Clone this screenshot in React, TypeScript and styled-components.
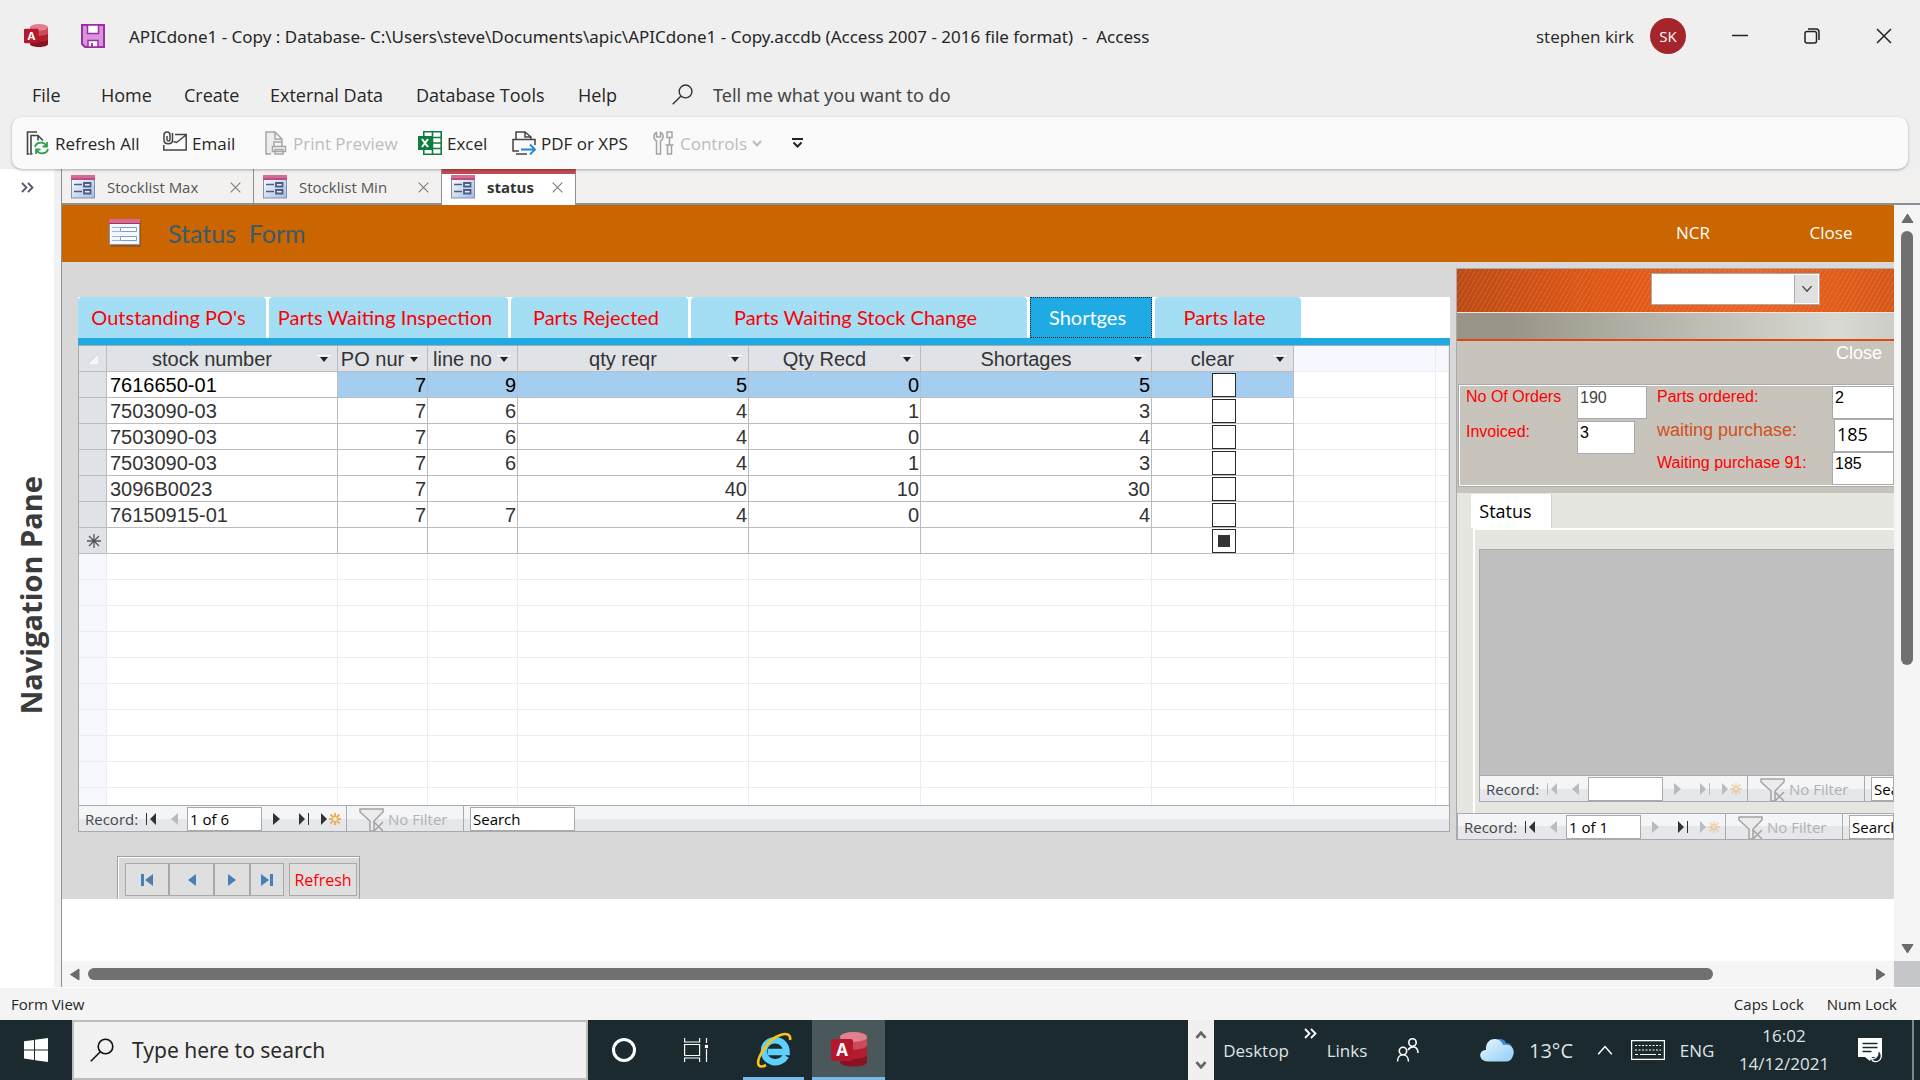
import React from "react";
import styled, { createGlobalStyle, css } from "styled-components";

const ui = `"Open Sans", "Noto Sans", sans-serif`;
const wideUi = `"Noto Sans", "Open Sans", sans-serif`;
const arial = `"Liberation Sans", Arial, sans-serif`;
const line = "#bcbcbc";
const frame = "#a9aaae";

const GlobalStyle = createGlobalStyle`
  *, *::before, *::after { box-sizing: border-box; }
  body { margin: 0; background: #fff; font-family: ${ui}; color: #262626; }
  button, input, select { font: inherit; color: inherit; margin: 0; padding: 0; border: 0; border-radius: 0; background: none; outline: none; }
  svg { display: block; flex: none; }
`;

const Page = styled.div`
  display: flex;
  flex-direction: column;
  height: 100vh;
  overflow: hidden;
`;

/* ---------- window header ---------- */

const WindowHeader = styled.header`
  background: #efefef;
  flex: none;
  position: relative;
  z-index: 1;
`;

const TitleBar = styled.div`
  display: flex;
  align-items: center;
  height: 72px;
  padding: 0 24px;
`;

const IconButton = styled.button`
  display: flex;
  align-items: center;
  justify-content: center;
`;

const SaveButton = styled(IconButton)`
  margin: 0 24px 0 33px;
`;

const WindowTitle = styled.h1`
  flex: 1;
  margin: 0;
  font-family: ${wideUi};
  font-size: 17px;
  font-weight: 400;
  white-space: pre;
`;

const Account = styled.button`
  display: flex;
  align-items: center;
  gap: 16px;
  font-size: 17px;
  margin-right: 42px;
`;

const Avatar = styled.span`
  width: 36px;
  height: 36px;
  border-radius: 50%;
  background: #a4262c;
  color: #fff;
  font-size: 15px;
  line-height: 36px;
`;

const WindowButtons = styled.div`
  display: flex;
  gap: 48px;
`;

const CaptionButton = styled(IconButton)`
  width: 24px;
  height: 32px;
`;

const MenuBar = styled.nav`
  display: flex;
  align-items: center;
  height: 45px;
  padding-left: 32px;
  font-size: 18px;
`;

const MenuItem = styled.button<{ $width: number }>`
  width: ${(p) => p.$width}px;
  text-align: left;
  white-space: nowrap;
`;

const TellMe = styled.label`
  display: flex;
  align-items: center;
  gap: 20px;
  padding-left: 10px;

  input {
    width: 300px;
    font-family: ${wideUi};
    font-size: 18px;
  }
  input::placeholder {
    color: #444;
    opacity: 1;
  }
`;

const RibbonStrip = styled.div`
  padding: 0 12px;
`;

const Ribbon = styled.div`
  display: flex;
  align-items: center;
  height: 52px;
  padding-left: 14px;
  border-radius: 10px;
  background: #fafafa;
  box-shadow: 0 1px 3px rgba(0, 0, 0, 0.3);
  font-size: 17px;
`;

const RibbonButton = styled.button<{ $width: number }>`
  display: flex;
  align-items: center;
  gap: 5px;
  width: ${(p) => p.$width}px;
  white-space: nowrap;

  &:disabled {
    color: #bdbdbd;
  }
`;

/* ---------- main area ---------- */

const Main = styled.main`
  display: flex;
  flex: 1;
  min-height: 0;
  padding-bottom: 1px;
`;

const NavPane = styled.aside`
  display: flex;
  flex-direction: column;
  align-items: center;
  width: 62px;
  flex: none;
  padding-top: 7px;
  border-right: 1px solid #8b8f96;
  background: linear-gradient(90deg, #fff 54px, #f0f1f3 54px);
`;

const PaneToggle = styled(IconButton)`
  width: 24px;
  height: 22px;
  margin-right: 6px;
`;

const PaneTitle = styled.h2`
  margin: auto;
  padding: 0 0 6px;
  writing-mode: vertical-rl;
  transform: rotate(180deg);
  font-size: 29px;
  line-height: 56px;
  font-weight: 700;
  color: #3b3b3b;
  white-space: nowrap;
`;

const Document = styled.section`
  display: flex;
  flex-direction: column;
  flex: 1;
  min-width: 0;
`;

const DocTabs = styled.div`
  display: flex;
  height: 36px;
  flex: none;
  background: #f2f1ef;
  box-shadow: inset 0 -2px #8b9097;
`;

const DocTab = styled.div<{ $active?: boolean; $width: number }>`
  display: flex;
  align-items: center;
  width: ${(p) => p.$width}px;
  padding: 0 12px 0 9px;
  border-right: 1px solid #8b9097;
  font-size: 15px;
  color: #555;
  ${(p) =>
    p.$active &&
    css`
      background: #fff;
      border-top: 5px solid #c14a50;
      padding-bottom: 5px;
      font-weight: 700;
      color: #333;
    `}

  button:nth-of-type(1) {
    flex: 1;
    display: flex;
    align-items: center;
    gap: 12px;
    white-space: nowrap;
  }
`;

const Viewport = styled.div`
  display: grid;
  grid-template-columns: minmax(0, 1fr) 26px;
  grid-template-rows: minmax(0, 1fr) 26px;
  flex: 1;
  min-height: 0;
`;

const ScrollBar = styled.div<{ $vertical?: boolean }>`
  display: flex;
  flex-direction: ${(p) => (p.$vertical ? "column" : "row")};
  align-items: center;
  gap: 6px;
  padding: ${(p) => (p.$vertical ? "7px 0 6px" : "0 7px")};
  background: #f5f5f5;
`;

const Track = styled.div<{ $vertical?: boolean }>`
  flex: 1;
  display: flex;
  flex-direction: ${(p) => (p.$vertical ? "column" : "row")};
  align-items: stretch;
`;

const Thumb = styled.div<{ $vertical?: boolean }>`
  ${(p) => (p.$vertical ? "height: 61.6%; width: 12px;" : "width: 91.3%; height: 12px;")}
  border-radius: 6px;
  background: #707070;
`;

const ScrollCorner = styled.div`
  background: #c5c6ca;
`;

/* ---------- form ---------- */

const FormSurface = styled.div`
  overflow: hidden;
  background: #fff;
`;

const FormHeader = styled.header`
  display: flex;
  align-items: center;
  height: 57px;
  padding: 0 30px 2px 47px;
  background: #cb6500;
  color: #fff;
  font-size: 17px;
`;

const FormTitle = styled.h2`
  flex: 1;
  margin: 0;
  padding-left: 27px;
  font-family: Lato, sans-serif;
  font-size: 25px;
  font-weight: 400;
  color: #3a5c6b;
  white-space: pre;
`;

const HeaderButton = styled.button`
  width: 66px;
  margin-left: 72px;
  text-align: center;
`;

const FormBody = styled.div`
  display: flex;
  gap: 6px;
  padding: 6px 0 0 16px;
  background: #d8d8d8;
`;

const FormColumn = styled.div`
  flex: 1;
  min-width: 0;
  padding-top: 29px;
`;

const PageTabs = styled.div`
  display: flex;
  gap: 3px;
  height: 48px;
  background: #fff;
  border-bottom: 7px solid #1eabe4;
  font-family: Lato, sans-serif;
  font-size: 20px;
`;

const PageTab = styled.button<{ $width: number; $active?: boolean }>`
  width: ${(p) => p.$width}px;
  && {
    padding: 0 7px 2px 0;
    border-radius: 4px 4px 0 0;
    background: #a4def5;
    color: #fe0000;
  }
  white-space: nowrap;
  ${(p) =>
    p.$active &&
    css`
      && {
        background: #1eabe4;
        border: 1px dotted #123;
        border-radius: 0;
        color: #fff;
      }
    `}
`;

const Sheet = styled.div`
  border: 1px solid ${frame};
  border-width: 1px 1px 0;
  height: 460px;
  overflow: hidden;
  background: #fff;
`;

const Grid = styled.table`
  width: 100%;
  table-layout: fixed;
  border-collapse: separate;
  border-spacing: 0;
  font-family: ${arial};
  font-size: 20px;
  line-height: 24px;
  color: #333;

  tr {
    height: 26px;
  }
  th,
  td {
    padding: 1px 1px 0 3px;
    border-right: 1px solid ${line};
    border-bottom: 1px solid ${line};
    font-weight: 400;
    text-align: right;
    white-space: nowrap;
    overflow: hidden;
  }
  thead th {
    padding: 0;
    background: #dfe2e7;
  }
  thead th.rest {
    background: #f7f7ff;
    border-color: #ececf2;
  }
  td.name {
    text-align: left;
  }
  td.rest {
    border-color: #ededed;
  }
`;

const Selector = styled.th<{ $blank?: boolean }>`
  background: ${(p) => (p.$blank ? "#f7f7ff" : "#dfe2e6")};

  svg {
    margin: 0 auto;
  }
`;

const DataRow = styled.tr<{ $current?: boolean; $blank?: boolean }>`
  ${(p) =>
    p.$current &&
    css`
      color: #000;
      td:not(.name):not(.rest) {
        background: #a4cdf0;
      }
    `}
  ${(p) =>
    p.$blank &&
    css`
      && td,
      && th {
        border-color: #ededed;
      }
    `}
`;

const ColumnButton = styled.button`
  display: flex;
  align-items: center;
  width: 100%;
  height: 25px;
  && {
    padding-right: 6px;
  }

  span {
    flex: 1;
    text-align: center;
  }
`;

const Tick = styled.input`
  appearance: none;
  display: block;
  width: 24px;
  height: 24px;
  && {
    margin: 0 auto;
    border: 1px solid #2b2b2b;
    background: #fff;
  }
  &&:indeterminate {
    background: linear-gradient(#333, #333) center / 12px 12px no-repeat #fff;
  }
`;

/* ---------- record navigation ---------- */

const RecordBar = styled.div`
  display: flex;
  align-items: center;
  height: 27px;
  padding-left: 6px;
  border: 1px solid ${frame};
  background: linear-gradient(#f4f5f7 50%, #e6e7ea 50%);
  font-size: 15px;
  color: #44484e;
  white-space: nowrap;
  overflow: hidden;
`;

const RecordLabel = styled.label`
  display: flex;
  width: 56px;
  flex: none;
`;

const RecordButton = styled(IconButton)<{ $width: number }>`
  width: ${(p) => p.$width}px;
  height: 24px;
  flex: none;
  color: #333;

  &:disabled {
    color: #bbb;
  }
  &:disabled .star {
    opacity: 0.35;
  }
`;

const RecordInput = styled.input<{ $width: number }>`
  && {
    width: ${(p) => p.$width}px;
    height: 24px;
    flex: none;
    padding-left: 2px;
    border: 1px solid ${frame};
    background: #fff;
    color: #000;
  }
  &::placeholder {
    color: #000;
    opacity: 1;
  }
`;

const FilterButton = styled.button`
  display: flex;
  align-items: center;
  gap: 4px;
  width: 118px;
  height: 25px;
  flex: none;
  margin-right: 6px;
  && {
    padding-left: 12px;
    border: 1px solid ${frame};
    border-width: 0 1px;
    color: #b0b2b6;
  }
`;

const Commands = styled.div`
  display: flex;
  align-items: flex-start;
  width: 243px;
  height: 43px;
  margin: 24px 0 0 39px;
  padding: 6px 0 0 7px;
  border: 1px solid #a0a0a0;
  border-bottom: 0;
  box-shadow: inset 1px 1px #fff;
`;

const CommandButton = styled(IconButton)<{ $width: number }>`
  width: ${(p) => p.$width}px;
  height: 33px;
  && {
    border: 1px solid #a8a8a8;
    background: #dfdfdf;
  }
`;

const RefreshButton = styled(CommandButton)`
  font-size: 16px;
  && {
    margin-left: 5px;
    color: #fe0000;
  }
`;

/* ---------- right-hand subform ---------- */

const SubForm = styled.section`
  width: 438px;
  flex: none;
  height: 572px;
  overflow: hidden;
  border: 1px solid ${frame};
  border-width: 1px 0 0 1px;
  background: #e5e6e0;
`;

const SubHeader = styled.div`
  height: 44px;
  padding: 4px 0 0 194px;
  border-bottom: 1px solid #f3e3da;
  background:
    repeating-linear-gradient(120deg, rgba(255, 190, 120, 0.18) 0 1px, transparent 1px 4px),
    linear-gradient(90deg, #bb4a15, #dc5618 30%, #ee6320 68%, #d55719);
`;

const Combo = styled.div`
  display: grid;
  grid-template-columns: 1fr 26px;
  align-items: stretch;
  width: 169px;
  height: 32px;
  border: 1px solid ${frame};
  background: #fff;

  select {
    grid-area: 1 / 1 / 2 / 3;
    appearance: none;
    width: 100%;
  }
  span {
    grid-area: 1 / 2;
    display: flex;
    align-items: center;
    justify-content: center;
    margin: 1px;
    border-left: 1px solid ${frame};
    background: #e0e0e0;
    pointer-events: none;
  }
`;

const SilverBand = styled.div`
  height: 28px;
  border-bottom: 2px solid #d84c10;
  background: linear-gradient(90deg, #989588 12%, #b0ada2 38%, #d8d9d3 87%, #cccdc7);
`;

const Summary = styled.div`
  height: 152px;
  background: #c8c4bb;
  font-family: ${arial};
`;

const SubClose = styled.button`
  display: block;
  && {
    margin: 0 12px 0 auto;
    height: 24px;
    color: #fff;
    font-size: 18px;
  }
`;

const SummaryFrame = styled.div`
  display: flex;
  justify-content: space-between;
  width: 436px;
  height: 103px;
  margin: 19px 0 0 1px;
  border: 1px solid ${frame};
  border-right: 0;
  box-shadow: inset 1px 1px #fff, inset 0 -1px #fff;
  font-size: 16px;
`;

const FieldColumn = styled.div<{ $row: number }>`
  display: grid;
  grid-auto-rows: ${(p) => p.$row}px;
  padding-top: 1px;
`;

const Field = styled.label<{ $label: number; $large?: boolean; $dim?: boolean }>`
  display: grid;
  grid-template-columns: ${(p) => p.$label}px auto;
  align-items: start;
  font-size: ${(p) => (p.$large ? 18 : 16)}px;
  line-height: 22px;
  color: ${(p) => (p.$large ? "#d0501c" : "#fe0000")};
  white-space: nowrap;

  input {
    height: 33px;
    padding: 0 0 10px 2px;
    border: 1px solid ${frame};
    background: #fff;
    color: ${(p) => (p.$dim ? "#444" : "#000")};
    ${(p) => p.$large && `font-family: ${ui}; padding-bottom: 4px;`}
  }
`;

const FieldLabel = styled.span`
  padding-left: 7px;
`;

const FieldInput = styled.input<{ $width: number }>`
  width: ${(p) => p.$width}px;
`;

const StatusPages = styled.div`
  padding: 1px 0 0 14px;
`;

const StatusTab = styled.button`
  display: block;
  width: 81px;
  height: 34px;
  && {
    background: #fff;
    border-right: 1px solid #d5d6d0;
    color: #000;
    padding-right: 11px;
    font-size: 18px;
  }
`;

const StatusPage = styled.div`
  height: 285px;
  margin-left: 2px;
  padding: 19px 0 0 4px;
  border: 2px solid #fff;
  border-width: 2px 0 0 2px;
`;

const EmptySheet = styled.div`
  height: 226px;
  border: 1px solid ${frame};
  border-width: 1px 0 0 1px;
  background: #bfbfbf;
`;

/* ---------- status bar and taskbar ---------- */

const StatusBar = styled.footer`
  display: flex;
  align-items: center;
  gap: 23px;
  height: 32px;
  flex: none;
  padding: 0 23px 0 11px;
  background: #f4f4f4;
  font-size: 15px;

  span:first-child {
    flex: 1;
  }
`;

const TaskBar = styled.footer`
  display: flex;
  align-items: center;
  height: 60px;
  flex: none;
  background: #1b2a2f;
  color: #dfe3e4;
  font-size: 17px;
`;

const TaskButton = styled(IconButton)<{ $width: number; $running?: boolean; $active?: boolean }>`
  width: ${(p) => p.$width}px;
  height: 60px;
  flex: none;
  ${(p) => p.$running && "box-shadow: inset 0 -3px #76b9ed;"}
  ${(p) => p.$active && "&& { background: #4a585c; }"}
`;

const TaskSearch = styled.label`
  display: flex;
  align-items: center;
  gap: 18px;
  width: 516px;
  height: 60px;
  padding-left: 16px;
  border: 2px solid #bdbdbd;
  background: #f1f1f1;

  input {
    flex: 1;
    font-family: ${wideUi};
    font-size: 21px;
  }
  input::placeholder {
    color: #2b2b2b;
    opacity: 1;
  }
`;

const RunningApps = styled.div`
  display: flex;
  align-items: center;
  flex: 1;
`;

const AppGroup = styled.div`
  display: flex;
  gap: 8px;
  padding-left: 11px;
`;

const Stepper = styled.div`
  display: flex;
  flex-direction: column;
  justify-content: space-around;
  width: 26px;
  height: 60px;
  background: #f0f0f0;

  button {
    display: flex;
    justify-content: center;
  }
`;

const TaskLink = styled.button<{ $width: number }>`
  width: ${(p) => p.$width}px;
  white-space: nowrap;
  text-align: center;
`;

const MoreButton = styled(IconButton)`
  align-self: flex-start;
  width: 24px;
  height: 26px;
`;

const Weather = styled.button`
  display: flex;
  align-items: center;
  justify-content: space-between;
  width: 93px;
  && {
    margin: 0 12px 0 36px;
    font-size: 20px;
  }
`;

const Clock = styled.button`
  width: 122px;
  line-height: 28px;
  && {
    margin-right: 12px;
  }
`;

const ShowDesktop = styled.button`
  width: 8px;
  height: 60px;
  && {
    margin-left: 27px;
    border-left: 2px solid #7d878a;
  }
`;

/* ---------- drawings ---------- */

const AccessLogo = ({ size }: { size: number }) => (
  <svg width={size} height={size} viewBox="0 0 36 36">
    <path d="M9 5v25c0 6 27 6 27 0V5z" fill="#8a1220" />
    <path d="M9 5v18c0 5 27 5 27 0V5z" fill="#b01e30" />
    <path d="M9 5v8c0 6 27 6 27 0V5z" fill="#cb4a5c" />
    <ellipse cx="22.5" cy="5" rx="13.5" ry="5" fill="#e2808f" />
    <rect y="7" width="22" height="22" rx="2" fill="#b3182c" />
    <text x="11" y="24" textAnchor="middle" fontFamily="Open Sans" fontWeight="700" fontSize="17" fill="#fff">A</text>
  </svg>
);

const SaveIcon = () => (
  <svg width="24" height="24" viewBox="0 0 24 24">
    <path d="M1 1h22v22H4l-3-3z" fill="#d795dd" stroke="#9c2fa5" strokeWidth="2" />
    <path d="M6.500 1h11v8.500h-11z" fill="#fff" stroke="#9c2fa5" strokeWidth="1.500" />
    <path d="M7 16.500h10v6.500H7z" fill="#fff" stroke="#9c2fa5" strokeWidth="1.500" />
    <path d="M11 19v4" stroke="#9c2fa5" strokeWidth="1.800" />
  </svg>
);

const Magnifier = ({ size, color = "#333" }: { size: number; color?: string }) => (
  <svg width={size} height={size} viewBox="0 0 24 24" fill="none" stroke={color} strokeWidth="1.600">
    <circle cx="15.500" cy="8.500" r="7.300" />
    <path d="M10.300 13.700L.8 23.200" />
  </svg>
);

const RefreshAllIcon = () => (
  <svg width="24" height="24" viewBox="0 0 24 24" fill="none" strokeWidth="1.600">
    <path d="M3.500 23H1.500V1H11M6.500 23H5V4.500h7l5 5M12 4.500v5" stroke="#444" />
    <path d="M9 16c1-5 9-6 11.500-1M21 11v4.500h-4.500M22 18c-1 5-9 6-11.500 1M10 23v-4.500h4.500" stroke="#30a24c" strokeWidth="1.800" />
  </svg>
);

const EmailIcon = () => (
  <svg width="24" height="24" viewBox="0 0 24 24" fill="none" stroke="#444" strokeWidth="1.500">
    <path d="M12 3.500h11.200V19H.8v-5M23 4l-9.500 7.500-3-1" />
    <path d="M4 5v3.500c0 2 3 2 3 0V4c0-4-6-4-6 0v5c0 5 8.500 5 8.500 0V2" />
  </svg>
);

const PrintIcon = () => (
  <svg width="24" height="24" viewBox="0 0 24 24" fill="none" stroke="#a5a5a5" strokeWidth="1.500">
    <path d="M7 23H2V1h9l7 7v2M11 1v7h7" fill="#ededed" />
    <path d="M10 15v-4h8v4M8.500 15.500h13v5h-13zM11 18.500h8V23h-8z" fill="#f6f6f6" />
  </svg>
);

const ExcelIcon = () => (
  <svg width="24" height="24" viewBox="0 0 24 24">
    <path d="M5.800.8h17.400v22.400H5.800z" fill="#fff" stroke="#117c41" strokeWidth="1.600" />
    <path d="M14.500 1v22M6 6.500h17M6 12h17M6 17.500h17" stroke="#117c41" strokeWidth="1.600" />
    <rect y="5" width="14" height="14" fill="#117c41" />
    <path d="M4 8l6 8M10 8l-6 8" stroke="#fff" strokeWidth="2" />
  </svg>
);

const PdfIcon = () => (
  <svg width="24" height="24" viewBox="0 0 24 24" fill="none" strokeWidth="1.500">
    <path d="M4 8V1h9l6 5v2M13 1v5h6M7 20H1V8.500h22V14M4 23h11" stroke="#444" />
    <path d="M9 18.500h14M18 13.500l5 5-5 5" stroke="#1e88d2" strokeWidth="1.800" />
  </svg>
);

const ToolsIcon = () => (
  <svg width="22" height="24" viewBox="0 0 22 24" fill="none" stroke="#a5a5a5" strokeWidth="1.500">
    <path d="M3.500 1.500C0 3 0 8 3.500 10v13h4V10c3.500-2 3.500-7 0-8.500V6h-4zM14 1h5v5.500h-5zM16.500 7v7M12.500 14h8M14.500 14v9h4v-9" />
  </svg>
);

const Chevron = ({ up, width = 10, color = "currentColor", stroke = 1.6 }: { up?: boolean; width?: number; color?: string; stroke?: number }) => (
  <svg width={width} height={width / 2 + 2} viewBox="0 0 10 7" fill="none" stroke={color} strokeWidth={stroke}>
    <path d={up ? "M1 6l4-4.500L9 6" : "M1 1l4 4.500L9 1"} />
  </svg>
);

const CustomizeIcon = () => (
  <svg width="11" height="10" viewBox="0 0 11 10" fill="none" stroke="#222" strokeWidth="2">
    <path d="M0 1h11M1.500 4.500l4 4 4-4" />
  </svg>
);

const DoubleChevron = ({ color }: { color: string }) => (
  <svg width="13" height="11" viewBox="0 0 13 11" fill="none" stroke={color} strokeWidth="1.800">
    <path d="M1 1l4.500 4.500L1 10M7 1l4.500 4.500L7 10" />
  </svg>
);

const Cross = ({ size, color }: { size: number; color: string }) => (
  <svg width={size} height={size} viewBox="0 0 16 16" fill="none" stroke={color} strokeWidth="1.500">
    <path d="M1 1l14 14M15 1L1 15" />
  </svg>
);

const FormIcon = () => (
  <svg width="24" height="24" viewBox="0 0 24 24">
    <defs>
      <linearGradient id="formPaper" x1="0" y1="0" x2="1" y2="1">
        <stop offset="0" stopColor="#fff" />
        <stop offset="1" stopColor="#a9bbdf" />
      </linearGradient>
    </defs>
    <rect x=".5" y="1" width="23" height="22" fill="url(#formPaper)" stroke="#8292b4" />
    <rect width="24" height="5" fill="#d46c94" />
    <path d="M0 4h24" stroke="#a8315e" />
    <path d="M3 9.500h8M3 16.500h8" stroke="#4a5f85" strokeWidth="1.500" />
    <path d="M13 8h6.500v3.500H13zM13 15h6.500v3.500H13z" fill="#e8eefa" stroke="#4a5f85" strokeWidth="1.800" />
  </svg>
);

const LargeFormIcon = () => (
  <svg width="32" height="28" viewBox="0 0 32 28">
    <rect x="2" y="2" width="30" height="26" fill="#8a4a08" opacity=".6" />
    <rect x=".5" y=".5" width="30" height="25" fill="#f4f8fe" stroke="#8496b6" />
    <rect width="31" height="5" fill="#d46c94" />
    <path d="M0 4.500h31" stroke="#a8315e" />
    <path d="M3 8.500h8M3 12.500h8M3 17.500h8M3 21.500h8" stroke="#9db5de" />
    <path d="M11.500 8.500h16v4h-16zM11.500 17.500h16v4h-16z" fill="#fff" stroke="#7d9bd0" />
  </svg>
);

const DropMark = () => (
  <svg width="14" height="8" viewBox="0 0 14 8">
    <path d="M0 0h14v1H0z" fill="#fff" />
    <path d="M3 2h8L7 7z" fill="#222" />
  </svg>
);

const StarMark = () => (
  <svg width="16" height="16" viewBox="0 0 16 16" stroke="#555" strokeWidth="1.300">
    <path d="M8 1v14M1 8h14M3 3l10 10M13 3L3 13" />
  </svg>
);

const CornerMark = () => (
  <svg width="12" height="12" viewBox="0 0 12 12">
    <path d="M12 0v12H0z" fill="#f4f6fa" stroke="#c8ccd4" strokeWidth=".8" />
  </svg>
);

type MoveKind = "first" | "prev" | "next" | "last" | "new";

const MoveIcon = ({ kind }: { kind: MoveKind }) => {
  if (kind === "prev" || kind === "next")
    return (
      <svg width="7" height="12" viewBox="0 0 7 12" fill="currentColor">
        <path d={kind === "prev" ? "M7 0v12L0 6z" : "M0 0v12l7-6z"} />
      </svg>
    );
  if (kind === "new")
    return (
      <svg width="21" height="14" viewBox="0 0 21 14">
        <path d="M0 1v12l6-6z" fill="currentColor" />
        <path className="star" d="M14 1v12M8 7h12M9.500 2.500l9 9M18.500 2.500l-9 9" stroke="#e9b05c" strokeWidth="2" />
        <circle className="star" cx="14" cy="7" r="2.500" fill="#fff3d8" stroke="#e9b05c" />
      </svg>
    );
  return (
    <svg width="11" height="12" viewBox="0 0 11 12" fill="currentColor">
      <path d={kind === "first" ? "M0 0h1v12H0zM10 0v12L4 6z" : "M10 0h1v12h-1zM1 0v12l6-6z"} />
    </svg>
  );
};

const FilterIcon = () => (
  <svg width="25" height="24" viewBox="0 0 25 24" fill="#ececec" stroke="#a3a3a3" strokeWidth="1.500">
    <path d="M1 2h23v3l-9 9v10h-4V14L1 5z" />
    <path d="M15 15l9 9M24 15l-9 9" fill="none" />
  </svg>
);

const CommandIcon = ({ kind }: { kind: MoveKind }) => (
  <svg width="14" height="12" viewBox="0 0 14 12" fill="#4a7fb5">
    {kind === "first" && <path d="M1 0h3v12H1zM13 0v12L5 6z" />}
    {kind === "prev" && <path d="M11 0v12L3 6z" />}
    {kind === "next" && <path d="M3 0v12l8-6z" />}
    {kind === "last" && <path d="M1 0v12l8-6zM10 0h3v12h-3z" />}
  </svg>
);

const ArrowHead = ({ dir }: { dir: "up" | "down" | "left" | "right" }) => {
  const d = {
    up: "M6.500 2L12 10.500H1z",
    down: "M6.500 11L12 2.500H1z",
    left: "M1.500 6.500L10 1v11z",
    right: "M11 6.500L2.500 1v11z",
  }[dir];
  return (
    <svg width="13" height="13" viewBox="0 0 13 13">
      <path d={d} fill="#6b6b6b" stroke="#6b6b6b" strokeLinejoin="round" />
    </svg>
  );
};

const WindowsLogo = () => (
  <svg width="24" height="24" viewBox="0 0 24 24" fill="#fff">
    <path d="M0 3.300L10 2v9.400H0zM11 1.800L24 0v11.400H11zM0 12.400h10v9.500L0 20.600zM11 12.400h13V24l-13-1.800z" />
  </svg>
);

const TaskViewIcon = () => (
  <svg width="24" height="24" viewBox="0 0 24 24" fill="none" stroke="#fff" strokeWidth="1.200">
    <path d="M.6 0v4h15V0M.6 6.500h15v11H.6zM.6 24v-4h15v4M22.500 0v5M22.500 11v13" />
    <rect x="21.500" y="7.500" width="2" height="2" fill="#fff" />
  </svg>
);

const ExplorerLogo = () => (
  <svg width="36" height="36" viewBox="0 0 36 36" fill="none">
    <path d="M30 24C24 34 8 31.500 8 19 8 5 30 4 30.500 20H12" stroke="#5ed0fb" strokeWidth="6.500" />
    <path d="M34 8c2-11-17-6-26 9C-1 30 1 38 10 33" stroke="#f5c518" strokeWidth="2.600" />
  </svg>
);

const PeopleIcon = () => (
  <svg width="24" height="24" viewBox="0 0 24 24" fill="none" stroke="#fff" strokeWidth="1.600">
    <circle cx="16.500" cy="4.500" r="3.700" />
    <circle cx="7" cy="13" r="3.700" />
    <path d="M1.500 23.500c0-9 11-9 11 0M12 12c3-5 10-4 10 3" />
  </svg>
);

const CloudIcon = () => (
  <svg width="34" height="24" viewBox="0 0 34 24">
    <defs>
      <linearGradient id="cloud" x1="0" y1="0" x2="1" y2="1">
        <stop offset="0" stopColor="#eaf6ff" />
        <stop offset="1" stopColor="#8ecdf8" />
      </linearGradient>
    </defs>
    <path d="M13 4c5-5 12-3 13 1 6 0 7 5 6 10H16z" fill="#3f86cf" />
    <path d="M8 23.500C-2 23.500-2 12 6 12 5-1 20-2 23 7c10-2 13 6 9 13-1 2-3 3.500-6 3.500z" fill="url(#cloud)" />
  </svg>
);

const KeyboardIcon = () => (
  <svg width="34" height="20" viewBox="0 0 34 20" fill="none" stroke="#fff" strokeWidth="1.200">
    <path d="M.6.6h32.800v18.800H.6z" />
    <path d="M4 5.500h26M4 10h26" strokeDasharray="2 1.500" />
    <path d="M4 14.500h3M9 14.500h16M27 14.500h3" />
  </svg>
);

const NoticeIcon = () => (
  <svg width="26" height="26" viewBox="0 0 26 26">
    <path d="M0 1h24v19H14l-2 4-5-4H0z" fill="#fff" />
    <path d="M4.500 6.500h15M4.500 10.500h15M4.500 14.500h9" stroke="#1b2a2f" strokeWidth="1.300" />
    <path d="M20 13.500c4 2 5 9-1 11-3 .5-5-1-5.500-3 4 1 7-2 6.500-8z" fill="#1b2a2f" stroke="#fff" strokeWidth="1.200" />
  </svg>
);

/* ---------- parts ---------- */

const menus: [string, number][] = [
  ["File", 69],
  ["Home", 83],
  ["Create", 86],
  ["External Data", 146],
  ["Database Tools", 162],
  ["Help", 84],
];

const docTabs = [
  { label: "Stocklist Max", width: 192 },
  { label: "Stocklist Min", width: 188 },
  { label: "status", width: 134, active: true },
];

const pageTabs = [
  { label: "Outstanding PO's", width: 188 },
  { label: "Parts Waiting Inspection", width: 239 },
  { label: "Parts Rejected", width: 177 },
  { label: "Parts Waiting Stock Change", width: 336 },
  { label: "Shortges", width: 122, active: true },
  { label: "Parts late", width: 146 },
];

const columns = [
  { label: "stock number", width: 231 },
  { label: "PO nur", width: 90 },
  { label: "line no", width: 90 },
  { label: "qty reqr", width: 231 },
  { label: "Qty Recd", width: 172 },
  { label: "Shortages", width: 231 },
  { label: "clear", width: 142 },
];

const records = [
  ["7616650-01", "7", "9", "5", "0", "5"],
  ["7503090-03", "7", "6", "4", "1", "3"],
  ["7503090-03", "7", "6", "4", "0", "4"],
  ["7503090-03", "7", "6", "4", "1", "3"],
  ["3096B0023", "7", "", "40", "10", "30"],
  ["76150915-01", "7", "7", "4", "0", "4"],
];

function RecordNavigator({ id, value, disabled = [] }: { id: string; value: string; disabled?: MoveKind[] }) {
  const move = (kind: MoveKind, label: string, width: number) => (
    <RecordButton $width={width} aria-label={label} disabled={disabled.includes(kind)}>
      <MoveIcon kind={kind} />
    </RecordButton>
  );
  return (
    <RecordBar>
      <RecordLabel htmlFor={id}>Record:</RecordLabel>
      {move("first", "First record", 21)}
      {move("prev", "Previous record", 25)}
      <RecordInput id={id} $width={75} defaultValue={value} />
      {move("next", "Next record", 29)}
      {move("last", "Last record", 25)}
      {move("new", "New record", 30)}
      <FilterButton disabled>
        <FilterIcon />
        No Filter
      </FilterButton>
      <RecordInput $width={105} placeholder="Search" aria-label="Search records" />
    </RecordBar>
  );
}

function Datasheet() {
  return (
    <Sheet>
      <Grid>
        <colgroup>
          <col width={28} />
          {columns.map((c) => (
            <col key={c.label} width={c.width} />
          ))}
          <col width={142} />
          <col />
        </colgroup>
        <thead>
          <tr>
            <Selector>
              <CornerMark />
            </Selector>
            {columns.map((c) => (
              <th key={c.label} scope="col">
                <ColumnButton>
                  <span>{c.label}</span>
                  <DropMark />
                </ColumnButton>
              </th>
            ))}
            <th className="rest" />
            <th className="rest" />
          </tr>
        </thead>
        <tbody>
          {records.map((r, i) => (
            <DataRow key={i} $current={i === 0}>
              <Selector />
              {r.map((v, j) => (
                <td key={j} className={j === 0 ? "name" : undefined}>
                  {v}
                </td>
              ))}
              <td>
                <Tick type="checkbox" aria-label={`clear ${r[0]}`} />
              </td>
              <td className="rest" />
              <td className="rest" />
            </DataRow>
          ))}
          <DataRow>
            <Selector>
              <StarMark />
            </Selector>
            {columns.slice(1).map((c) => (
              <td key={c.label} />
            ))}
            <td>
              <Tick
                type="checkbox"
                aria-label="clear new record"
                ref={(el: HTMLInputElement | null) => {
                  if (el) el.indeterminate = true;
                }}
              />
            </td>
            <td className="rest" />
            <td className="rest" />
          </DataRow>
          {Array.from({ length: 10 }, (_, i) => (
            <DataRow key={i} $blank>
              <Selector $blank />
              {Array.from({ length: 9 }, (_, j) => (
                <td key={j} />
              ))}
            </DataRow>
          ))}
        </tbody>
      </Grid>
    </Sheet>
  );
}

function OrdersSubForm() {
  return (
    <SubForm>
      <SubHeader>
        <Combo>
          <select aria-label="Order" />
          <span>
            <Chevron width={12} color="#444" stroke={1.2} />
          </span>
        </Combo>
      </SubHeader>
      <SilverBand />
      <Summary>
        <SubClose>Close</SubClose>
        <SummaryFrame>
          <FieldColumn $row={35}>
            <Field $label={118} $dim>
              <FieldLabel>No Of Orders</FieldLabel>
              <FieldInput $width={70} defaultValue="190" />
            </Field>
            <Field $label={118}>
              <FieldLabel>Invoiced:</FieldLabel>
              <FieldInput $width={58} defaultValue="3" />
            </Field>
          </FieldColumn>
          <FieldColumn $row={33}>
            <Field $label={175}>
              Parts ordered:
              <FieldInput $width={62} defaultValue="2" />
            </Field>
            <Field $label={177} $large>
              waiting purchase:
              <FieldInput $width={60} defaultValue="185" />
            </Field>
            <Field $label={175}>
              Waiting purchase 91:
              <FieldInput $width={62} defaultValue="185" />
            </Field>
          </FieldColumn>
        </SummaryFrame>
      </Summary>
      <StatusPages>
        <StatusTab>Status</StatusTab>
        <StatusPage>
          <EmptySheet />
          <RecordNavigator id="inner-record" value="" disabled={["first", "prev", "next", "last", "new"]} />
        </StatusPage>
      </StatusPages>
      <RecordNavigator id="order-record" value="1 of 1" disabled={["prev", "next", "new"]} />
    </SubForm>
  );
}

export default function App() {
  return (
    <Page>
      <GlobalStyle />
      <WindowHeader>
        <TitleBar>
          <AccessLogo size={24} />
          <SaveButton aria-label="Save">
            <SaveIcon />
          </SaveButton>
          <WindowTitle>
            {"APICdone1 - Copy : Database- C:\\Users\\steve\\Documents\\apic\\APICdone1 - Copy.accdb (Access 2007 - 2016 file format)  -  Access"}
          </WindowTitle>
          <Account>
            stephen kirk
            <Avatar>SK</Avatar>
          </Account>
          <WindowButtons>
            <CaptionButton aria-label="Minimize">
              <svg width="16" height="16" viewBox="0 0 16 16" stroke="#222" strokeWidth="1.500">
                <path d="M0 7.500h16" />
              </svg>
            </CaptionButton>
            <CaptionButton aria-label="Restore">
              <svg width="16" height="16" viewBox="0 0 16 16" fill="none" stroke="#222" strokeWidth="1.500">
                <rect x="1" y="3.500" width="11.500" height="11.500" rx="2" />
                <path d="M4 1h8c2 0 3 1 3 3v8" />
              </svg>
            </CaptionButton>
            <CaptionButton aria-label="Close window">
              <Cross size={16} color="#222" />
            </CaptionButton>
          </WindowButtons>
        </TitleBar>
        <MenuBar>
          {menus.map(([label, width]) => (
            <MenuItem key={label} $width={width}>
              {label}
            </MenuItem>
          ))}
          <TellMe>
            <Magnifier size={21} />
            <input placeholder="Tell me what you want to do" aria-label="Tell me what you want to do" />
          </TellMe>
        </MenuBar>
        <RibbonStrip>
          <Ribbon>
            <RibbonButton $width={137}>
              <RefreshAllIcon />
              Refresh All
            </RibbonButton>
            <RibbonButton $width={101}>
              <EmailIcon />
              Email
            </RibbonButton>
            <RibbonButton $width={154} disabled>
              <PrintIcon />
              Print Preview
            </RibbonButton>
            <RibbonButton $width={94}>
              <ExcelIcon />
              Excel
            </RibbonButton>
            <RibbonButton $width={141}>
              <PdfIcon />
              PDF or XPS
            </RibbonButton>
            <RibbonButton $width={139} disabled>
              <ToolsIcon />
              Controls
              <Chevron width={10} stroke={2} />
            </RibbonButton>
            <IconButton aria-label="Customize toolbar">
              <CustomizeIcon />
            </IconButton>
          </Ribbon>
        </RibbonStrip>
      </WindowHeader>

      <Main>
        <NavPane>
          <PaneToggle aria-label="Open navigation pane">
            <DoubleChevron color="#555a66" />
          </PaneToggle>
          <PaneTitle>Navigation Pane</PaneTitle>
        </NavPane>
        <Document>
          <DocTabs>
            {docTabs.map((t) => (
              <DocTab key={t.label} $width={t.width} $active={t.active}>
                <button>
                  <FormIcon />
                  {t.label}
                </button>
                <IconButton aria-label={`Close ${t.label}`}>
                  <Cross size={11} color="#777" />
                </IconButton>
              </DocTab>
            ))}
          </DocTabs>
          <Viewport>
            <FormSurface>
              <FormHeader>
                <LargeFormIcon />
                <FormTitle>Status  Form</FormTitle>
                <HeaderButton>NCR</HeaderButton>
                <HeaderButton>Close</HeaderButton>
              </FormHeader>
              <FormBody>
                <FormColumn>
                  <PageTabs>
                    {pageTabs.map((t) => (
                      <PageTab key={t.label} $width={t.width} $active={t.active}>
                        {t.label}
                      </PageTab>
                    ))}
                  </PageTabs>
                  <Datasheet />
                  <RecordNavigator id="sheet-record" value="1 of 6" disabled={["prev"]} />
                  <Commands>
                    <CommandButton $width={44} aria-label="First">
                      <CommandIcon kind="first" />
                    </CommandButton>
                    <CommandButton $width={45} aria-label="Previous">
                      <CommandIcon kind="prev" />
                    </CommandButton>
                    <CommandButton $width={36} aria-label="Next">
                      <CommandIcon kind="next" />
                    </CommandButton>
                    <CommandButton $width={34} aria-label="Last">
                      <CommandIcon kind="last" />
                    </CommandButton>
                    <RefreshButton $width={68}>Refresh</RefreshButton>
                  </Commands>
                </FormColumn>
                <OrdersSubForm />
              </FormBody>
            </FormSurface>
            <ScrollBar $vertical>
              <ArrowHead dir="up" />
              <Track $vertical>
                <Thumb $vertical />
              </Track>
              <ArrowHead dir="down" />
            </ScrollBar>
            <ScrollBar>
              <ArrowHead dir="left" />
              <Track>
                <Thumb />
              </Track>
              <ArrowHead dir="right" />
            </ScrollBar>
            <ScrollCorner />
          </Viewport>
        </Document>
      </Main>

      <StatusBar>
        <span>Form View</span>
        <span>Caps Lock</span>
        <span>Num Lock</span>
      </StatusBar>

      <TaskBar>
        <TaskButton $width={72} aria-label="Start">
          <WindowsLogo />
        </TaskButton>
        <TaskSearch>
          <Magnifier size={24} color="#111" />
          <input placeholder="Type here to search" aria-label="Type here to search" />
        </TaskSearch>
        <RunningApps>
          <TaskButton $width={72} aria-label="Cortana">
            <svg width="26" height="26" viewBox="0 0 26 26" fill="none" stroke="#fff" strokeWidth="3">
              <circle cx="13" cy="13" r="10.500" />
            </svg>
          </TaskButton>
          <TaskButton $width={72} aria-label="Task View">
            <TaskViewIcon />
          </TaskButton>
          <AppGroup>
            <TaskButton $width={61} $running aria-label="Internet Explorer">
              <ExplorerLogo />
            </TaskButton>
            <TaskButton $width={73} $running $active aria-label="Access">
              <AccessLogo size={36} />
            </TaskButton>
          </AppGroup>
        </RunningApps>
        <Stepper>
          <button aria-label="Scroll up">
            <Chevron up width={12} color="#666" stroke={2.4} />
          </button>
          <button aria-label="Scroll down">
            <Chevron width={12} color="#666" stroke={2.4} />
          </button>
        </Stepper>
        <TaskLink $width={84}>Desktop</TaskLink>
        <MoreButton aria-label="More toolbars">
          <DoubleChevron color="#fff" />
        </MoreButton>
        <TaskLink $width={50}>Links</TaskLink>
        <TaskButton $width={72} aria-label="People">
          <PeopleIcon />
        </TaskButton>
        <Weather>
          <CloudIcon />
          13°C
        </Weather>
        <TaskButton $width={40} aria-label="Hidden icons">
          <Chevron up width={20} color="#fff" stroke={0.9} />
        </TaskButton>
        <TaskButton $width={46} aria-label="Touch keyboard">
          <KeyboardIcon />
        </TaskButton>
        <TaskLink $width={52}>ENG</TaskLink>
        <Clock>
          16:02
          <br />
          14/12/2021
        </Clock>
        <TaskButton $width={28} aria-label="Notifications">
          <NoticeIcon />
        </TaskButton>
        <ShowDesktop aria-label="Show desktop" />
      </TaskBar>
    </Page>
  );
}
